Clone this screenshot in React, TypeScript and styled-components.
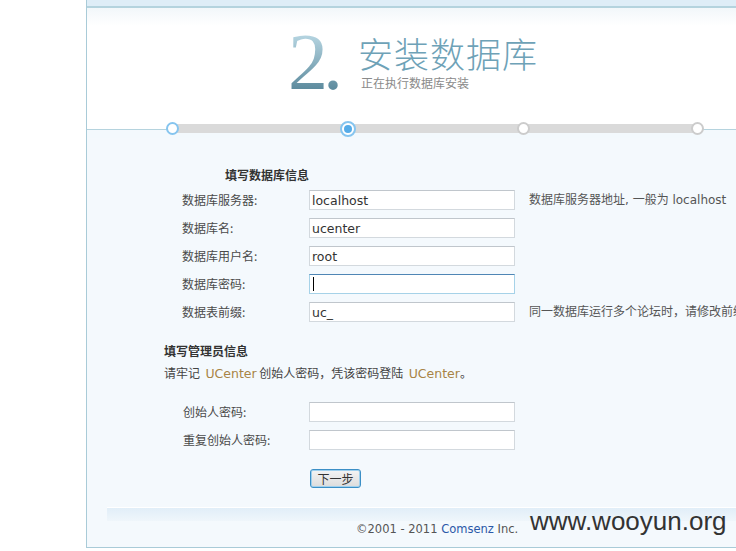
import React from "react";
import styled, { createGlobalStyle } from "styled-components";

const Global = createGlobalStyle`
  html, body { margin: 0; padding: 0; background: #ffffff; overflow: hidden; }
  body { width: 736px; height: 551px; font-family: "Noto Sans CJK SC", "DejaVu Sans", sans-serif; }
`;

const Shell = styled.div`
  margin-left: 86px;
  width: 760px;
  border-left: 1px solid #a9cbd8;
  border-bottom: 1px solid #a9cbd8;
  position: relative;
`;

const TopStrip = styled.div`
  height: 6px;
  background: #deedf7;
  border-bottom: 2px solid #b4d3de;
`;

const Header = styled.div`
  height: 112px;
  background: linear-gradient(to bottom, #f2f7fa 0, #ffffff 18px);
  display: flex;
  align-items: flex-start;
  padding-left: 201px;
  box-sizing: border-box;
`;

const StepNumber = styled.div`
  font-family: "Liberation Serif", "DejaVu Serif", serif;
  font-size: 80px;
  line-height: 80px;
  letter-spacing: -5px;
  margin-top: 14px;
  background: linear-gradient(to bottom, #b7d6e2 15%, #5c8a9d 85%);
  -webkit-background-clip: text;
  background-clip: text;
  color: transparent;
`;

const TitleBlock = styled.div`
  display: flex;
  flex-direction: column;
  margin-left: 20px;
  margin-top: 27px;
`;

const Title = styled.div`
  font-family: "Noto Sans CJK SC", sans-serif;
  font-weight: 300;
  font-size: 35px;
  line-height: 36px;
  color: #6ea2b7;
  letter-spacing: 1px;
`;

const Subtitle = styled.div`
  font-size: 12px;
  line-height: 14px;
  color: #8a8a8a;
  margin-left: 3px;
  margin-top: 5px;
`;

const Stepper = styled.div`
  height: 18px;
  background: linear-gradient(to bottom, #ffffff 0 9px, #b5d3de 9px 10px, #f3f9fd 10px);
  padding-left: 79px;
`;

const Track = styled.div`
  position: relative;
  width: 538px;
  height: 18px;
  display: flex;
  align-items: center;
  justify-content: space-between;
  &::before {
    content: "";
    position: absolute;
    left: 7px;
    right: 7px;
    top: 4px;
    height: 9px;
    background: #dadada;
  }
`;

const Dot = styled.div<{ $state: "done" | "active" | "todo" }>`
  position: relative;
  box-sizing: border-box;
  width: ${(p) => (p.$state === "active" ? 16 : 13)}px;
  height: ${(p) => (p.$state === "active" ? 16 : 13)}px;
  border-radius: 50%;
  background: #ffffff;
  border: 2px solid ${(p) => (p.$state === "todo" ? "#cccccc" : "#86c5ef")};
  margin-top: -1px;
  display: flex;
  align-items: center;
  justify-content: center;
  &::after {
    content: "";
    display: ${(p) => (p.$state === "active" ? "block" : "none")};
    width: 8px;
    height: 8px;
    border-radius: 50%;
    background: #56ace8;
  }
`;

const Content = styled.div`
  background: #f4f9fd;
  padding-top: 30px;
  height: 409px;
  box-sizing: border-box;
  display: flex;
  flex-direction: column;
`;

const SectionTitle = styled.div<{ $indent: number; $top?: number }>`
  font-size: 12px;
  line-height: 14px;
  font-weight: 700;
  color: #333333;
  padding-left: ${(p) => p.$indent}px;
  margin-top: ${(p) => p.$top ?? 0}px;
`;

const Form = styled.div<{ $top: number; $indent: number }>`
  display: grid;
  grid-template-columns: ${(p) => 309 - 87 - p.$indent - 14}px 206px auto;
  column-gap: 14px;
  row-gap: 8px;
  align-items: center;
  margin-top: ${(p) => p.$top}px;
  padding-left: ${(p) => p.$indent}px;
`;

const Label = styled.div`
  font-size: 12px;
  line-height: 14px;
  color: #4a4a4a;
`;

const Field = styled.div<{ $focused?: boolean }>`
  height: 20px;
  box-sizing: border-box;
  background: #ffffff;
  border: 1px solid ${(p) => (p.$focused ? "#a6d2e8" : "#d3d9de")};
  border-top-color: ${(p) => (p.$focused ? "#4f86b5" : "#c0c6cc")};
  display: flex;
  align-items: center;
  padding-left: 2px;
  font-family: "DejaVu Sans", sans-serif;
  font-size: 12.5px;
  color: #333333;
  white-space: nowrap;
`;

const Caret = styled.span`
  display: inline-block;
  width: 1px;
  height: 14px;
  background: #000;
  margin-left: 1px;
`;

const Hint = styled.div`
  font-size: 12px;
  line-height: 14px;
  color: #555555;
  white-space: nowrap;
  font-family: "DejaVu Sans", "Noto Sans CJK SC", sans-serif;
`;

const Intro = styled.div`
  font-size: 12px;
  line-height: 14px;
  color: #444444;
  margin-top: 8px;
  padding-left: 77px;
  white-space: pre;
`;

const Brand = styled.span`
  color: #a88446;
  font-family: "DejaVu Sans", sans-serif;
  font-size: 12.5px;
`;

const Button = styled.button`
  margin-top: 19px;
  margin-left: 223px;
  width: 51px;
  height: 19px;
  padding: 0;
  border: 1px solid #3b8fc6;
  border-radius: 3px;
  background: linear-gradient(to bottom, #f4f4f4 0%, #dcdcdc 100%);
  box-shadow: inset 0 0 0 1px #9fd0ee;
  font-family: "Noto Sans CJK SC", sans-serif;
  font-size: 12px;
  line-height: 15px;
  color: #333;
  align-self: flex-start;
`;

const FooterBand = styled.div`
  margin-top: 19px;
  margin-left: 20px;
  height: 13px;
  border-top: 1px solid #ffffff;
  background: linear-gradient(to bottom, #e1eef8, #eff6fb);
`;

const Copyright = styled.div`
  font-family: "DejaVu Sans", sans-serif;
  font-size: 11.5px;
  line-height: 14px;
  color: #555555;
  padding-left: 269px;
  margin-top: 1px;
`;

const Link = styled.span`
  color: #2b58a8;
`;

const Watermark = styled.div`
  position: absolute;
  left: 443px;
  top: 504px;
  font-family: "Liberation Sans", Arial, sans-serif;
  font-size: 26px;
  line-height: 34px;
  color: #333333;
`;

export default function App() {
  return (
    <>
      <Global />
      <Shell>
        <TopStrip />
        <Header>
          <StepNumber>2.</StepNumber>
          <TitleBlock>
            <Title>安装数据库</Title>
            <Subtitle>正在执行数据库安装</Subtitle>
          </TitleBlock>
        </Header>
        <Stepper>
          <Track>
            <Dot $state="done" />
            <Dot $state="active" />
            <Dot $state="todo" />
            <Dot $state="todo" />
          </Track>
        </Stepper>
        <Content>
          <SectionTitle $indent={138}>填写数据库信息</SectionTitle>
          <Form $top={8} $indent={95}>
            <Label>数据库服务器:</Label>
            <Field>localhost</Field>
            <Hint>数据库服务器地址, 一般为 localhost</Hint>
            <Label>数据库名:</Label>
            <Field>ucenter</Field>
            <div />
            <Label>数据库用户名:</Label>
            <Field>root</Field>
            <div />
            <Label>数据库密码:</Label>
            <Field $focused>
              <Caret />
            </Field>
            <div />
            <Label>数据表前缀:</Label>
            <Field>uc_</Field>
            <Hint>同一数据库运行多个论坛时，请修改前缀</Hint>
          </Form>
          <SectionTitle $indent={77} $top={22}>
            填写管理员信息
          </SectionTitle>
          <Intro>
            请牢记  <Brand>UCenter</Brand> 创始人密码，凭该密码登陆  <Brand>UCenter</Brand>。
          </Intro>
          <Form $top={21} $indent={96}>
            <Label>创始人密码:</Label>
            <Field />
            <div />
            <Label>重复创始人密码:</Label>
            <Field />
            <div />
          </Form>
          <Button>下一步</Button>
          <FooterBand />
          <Copyright>
            ©2001 - 2011 <Link>Comsenz</Link> Inc.
          </Copyright>
        </Content>
        <Watermark>www.wooyun.org</Watermark>
      </Shell>
    </>
  );
}
